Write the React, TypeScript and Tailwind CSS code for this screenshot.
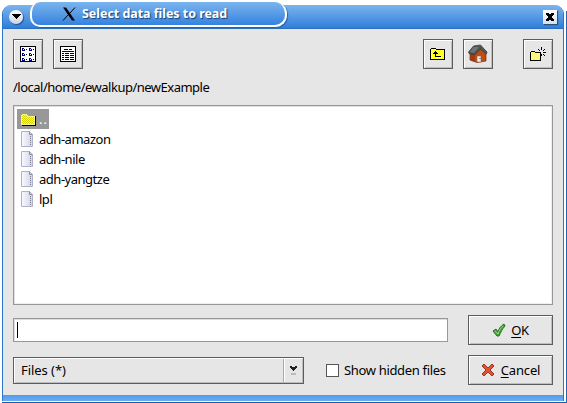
import type { ReactNode } from "react";

const raised = "border border-[#5c5c5c] bg-[#e6e6e6] shadow-[inset_1px_1px_0_#fff,inset_-1px_-1px_0_#bdbdbd]";

function ToolButton({ children, className = "" }: { children: ReactNode; className?: string }) {
  return (
    <button className={`flex h-[30px] w-[30px] shrink-0 items-center justify-center ${raised} ${className}`}>
      {children}
    </button>
  );
}

function Dither({ id, color }: { id: string; color: string }) {
  return (
    <defs>
      <pattern id={id} width="2" height="2" patternUnits="userSpaceOnUse">
        <rect width="2" height="2" fill="#ffff20" />
        <path d="M0 0h1v1H0zM1 1h1v1H1z" fill={color} />
      </pattern>
    </defs>
  );
}

function ListIcon() {
  return (
    <svg width="16" height="16" shapeRendering="crispEdges">
      <rect x=".5" y=".5" width="15" height="15" fill="#fff" stroke="#000" />
      {[2, 7, 12].map((y) =>
        [2, 9].map((x) => (
          <g key={`${x}-${y}`}>
            <path d={`M${x} ${y}h2v1h1v2h-3z`} fill="#000080" />
            <path d={`M${x + 1} ${y + 1}h1v1h-1z`} fill="#fff" />
            <path d={`M${x + 4} ${y + 1}h1v1h-1z`} fill="#000" />
          </g>
        )),
      )}
    </svg>
  );
}

function DetailIcon() {
  return (
    <svg width="16" height="16" shapeRendering="crispEdges">
      <rect x=".5" y=".5" width="15" height="15" fill="#fff" stroke="#000" />
      <path d="M2 5h12v1H2z" fill="#000080" />
      <path d="M4 3h4v1H4zM9 3h3v1H9z" />
      {[7, 9, 11, 13].map((y) => (
        <path key={y} d={`M2 ${y}h2v1h-2zM5 ${y}h4v1h-4zM10 ${y}h4v1h-4z`} />
      ))}
    </svg>
  );
}

function UpIcon() {
  return (
    <svg width="16" height="14" shapeRendering="crispEdges">
      <Dither id="up" color="#fff8a8" />
      <path d="M.5 12.5v-10l1-1h4l1 1h8v10z" fill="url(#up)" stroke="#000" />
      <path d="M5 4h1v1H5zM4 5h3v1H4zM3 6h5v1H3zM5 7h1v3H5zM6 9h5v1H6z" />
    </svg>
  );
}

function HomeIcon() {
  return (
    <svg width="20" height="20">
      <path d="M2 9 7 8l5-3 6 5v7l-9 1.5L2 16z" fill="#c04c10" stroke="#6b2e12" strokeWidth=".7" />
      <path d="m2 9 5-1v10l-5-2z" fill="#9b3c13" />
      <path d="m.5 8 5-6 7-1 6.500 7-.5 2-6-5-5.500 5.500-6-1z" fill="#505354" stroke="#333" strokeWidth=".7" />
      <path d="m5.500 3-3.500 5 4 1 5-6z" fill="#707474" />
      <path d="M9 12h4v6H9z" fill="#eee" stroke="#96654b" strokeWidth=".6" />
      <path d="M11.500 14h1v1h-1z" fill="#333" />
    </svg>
  );
}

function NewFolderIcon() {
  return (
    <svg width="16" height="16" shapeRendering="crispEdges">
      <Dither id="new" color="#ffff80" />
      <path d="M.5 14.5v-8l1-1h3l1 1h5v8z" fill="url(#new)" stroke="#000" />
      <path d="M11 1h1v3h-1zM8 3h1v1H8zM9 4h1v1H9zM13 4h1v1h-1zM14 3h1v1h-1zM13 6h3v1h-3zM7 6h3v1H7zM13 8h1v1h-1zM14 9h1v1h-1zM11 8h1v2h-1z" />
    </svg>
  );
}

function FileRow({ name }: { name: string }) {
  return (
    <div className="flex h-5 items-center pl-1">
      <svg width="13" height="16" className="mr-[5px] shrink-0">
        <defs>
          <linearGradient id="paper">
            <stop stopColor="#fafaff" />
            <stop offset="1" stopColor="#d2d2e4" />
          </linearGradient>
        </defs>
        <path d="M.5.5h8l3 3v12H.5z" fill="url(#paper)" stroke="#b0b0c6" />
        <path d="M8.5.5v3h3" fill="none" stroke="#8c8ca2" />
        <path d="M9.500 5v9" fill="none" stroke="#77778b" strokeDasharray="1 1" />
      </svg>
      <span className="tracking-[-0.48px]">{name}</span>
    </div>
  );
}

export default function App() {
  return (
    <div className="relative flex h-[403px] w-[567px] flex-col overflow-hidden bg-white pt-[5px] font-['Noto_Sans',sans-serif] text-[13px] leading-5 text-black">
      <div className="ml-[2px] flex h-[396px] w-[562px] flex-col self-start overflow-hidden rounded-t-[9px] border-x border-[#2b78ca] bg-[#e6e6e6]">
        <header className="flex h-6 shrink-0 items-center justify-between border-b border-[#2c6fc0] bg-linear-to-b from-[#7bb4ee] to-[#2e7eda] pr-[6px] pl-[6px]">
          <button className="flex h-[14px] w-[14px] items-center justify-center rounded-full bg-linear-to-b from-white to-[#c8d4e4] shadow-[1px_1px_1px_#285080]">
            <svg width="9" height="5" shapeRendering="crispEdges"><path d="M0 0h9v1H8v1H7v1H6v1H5v1H4V4H3V3H2V2H1V1H0z" /></svg>
          </button>
          <button className="flex h-[14px] w-[14px] items-center justify-center bg-linear-to-b from-white to-[#d5e0ed] shadow-[1px_1px_1px_#285080]">
            <svg width="8" height="8" shapeRendering="crispEdges"><path d="M0 0h3v1h2V0h3v2H7v1H6v2h1v1h1v2H5V7H3v1H0V6h1V5h1V3H1V2H0z" /></svg>
          </button>
        </header>

        <main className="flex grow flex-col px-[10px] pt-[10px]">
          <div className="flex h-[30px]">
            <ToolButton><ListIcon /></ToolButton>
            <ToolButton className="ml-[10px]"><DetailIcon /></ToolButton>
            <ToolButton className="ml-auto"><UpIcon /></ToolButton>
            <ToolButton className="ml-[10px]"><HomeIcon /></ToolButton>
            <ToolButton className="ml-[30px]"><NewFolderIcon /></ToolButton>
          </div>
          <p className="mt-2 h-7 leading-5 tracking-[-0.5px]">/local/home/ewalkup/newExample</p>
          <div className="h-[200px] border border-[#989898] bg-white px-[3px] pt-[3px] shadow-[inset_1px_1px_0_#dedede,inset_-1px_-1px_0_#eee]">
            <div className="flex h-5 w-8 items-center bg-[#989898] pl-1 text-white">
              <svg width="15" height="13" className="mr-[3px]" shapeRendering="crispEdges">
                <Dither id="folder" color="#d8d800" />
                <path d="M.5 11.500V3.500l1-2h4l1 2h7v8z" fill="url(#folder)" stroke="#f5f580" />
                <path d="M1 12.5h13.5V3" fill="none" stroke="#000" />
              </svg>
              <span className="tracking-[1px]">..</span>
            </div>
            <FileRow name="adh-amazon" />
            <FileRow name="adh-nile" />
            <FileRow name="adh-yangtze" />
            <FileRow name="lpl" />
          </div>

          <div className="mt-[10px] flex items-center justify-between">
            <div className="flex h-6 w-[435px] items-center border border-[#989898] bg-white pl-[3px] shadow-[inset_1px_1px_0_#dedede]">
              <i className="h-4 w-px bg-black" />
            </div>
            <button className={`flex h-[30px] w-[85px] items-center justify-center gap-[5px] ${raised}`}>
              <svg width="14" height="14"><path d="m1 8 3-2 2 3c1-4 3-6 6-8l1 2c-3 3-4 6-6 10H5z" fill="#45aa38" stroke="#286d25" /><path d="m3 8 3 3c1-4 3-6 5-8" fill="none" stroke="#8bd77e" /></svg>
              <span className="tracking-[-0.3px]"><u className="underline-offset-2">O</u>K</span>
            </button>
          </div>
          <div className="mt-[10px] flex items-center">
            <div className={`flex h-[27px] w-[291px] items-center justify-between pl-[7px] ${raised}`}>
              <span className="tracking-[-0.05px]">Files (*)</span>
              <div className="flex h-[23px] w-5 items-center justify-center border-l border-[#aaa] shadow-[inset_1px_0_0_#fff]">
                <svg width="7" height="9" shapeRendering="crispEdges"><path d="M0 0h2v1h3V0h2v2H6v1H5v1H4v1H3V4H2V3H1V2H0z" fill="#222" /><path d="M1 7h5v2H1z" fill="#bbb" /></svg>
              </div>
            </div>
            <i className="ml-[22px] h-[13px] w-[13px] border border-[#555] bg-white" />
            <span className="ml-[5px] w-[124px] tracking-[-0.33px] whitespace-nowrap">Show hidden files</span>
            <button className={`flex h-[30px] w-[85px] items-center justify-center gap-[6px] ${raised}`}>
              <svg width="14" height="14"><path d="m1 3 2-2 4 4 4-4 2 2-4 4 4 4-2 2-4-4-4 4-2-2 4-4z" fill="#e5512e" stroke="#9d3524" /></svg>
              <span className="tracking-[-0.15px]"><u className="underline-offset-2">C</u>ancel</span>
            </button>
          </div>
        </main>
        <footer className="h-[6px] shrink-0 bg-linear-to-b from-[#529ae9] to-[#69adf5]" />
      </div>
      <i className="absolute bottom-0 left-[2px] h-[2px] w-[565px] border-t border-white bg-[#1d5da6]" />
      <i className="absolute top-[11px] right-0 bottom-0 w-px bg-[#1d6aba]" />
      <div className="absolute top-[2px] left-[30px] flex h-[25px] w-[257px] items-center rounded-l-[10px] rounded-r-[12px] border-r-2 border-b-2 border-l-2 border-white bg-linear-to-b from-[#7bb4ee] to-[#3482de] shadow-[1px_1px_1px_#2763a5]">
        <svg width="14" height="14" className="mr-[6px] ml-[30px]"><path d="M1 .5h3l9 13h-3z" fill="#000" /><path d="M13 .5 8 6M6 8l-5 5.5" stroke="#000" /></svg>
        <span className="text-[12.5px] font-bold tracking-[-0.04px] whitespace-nowrap text-white [text-shadow:1px_1px_1px_#173f75]">Select data files to read</span>
      </div>
    </div>
  );
}
